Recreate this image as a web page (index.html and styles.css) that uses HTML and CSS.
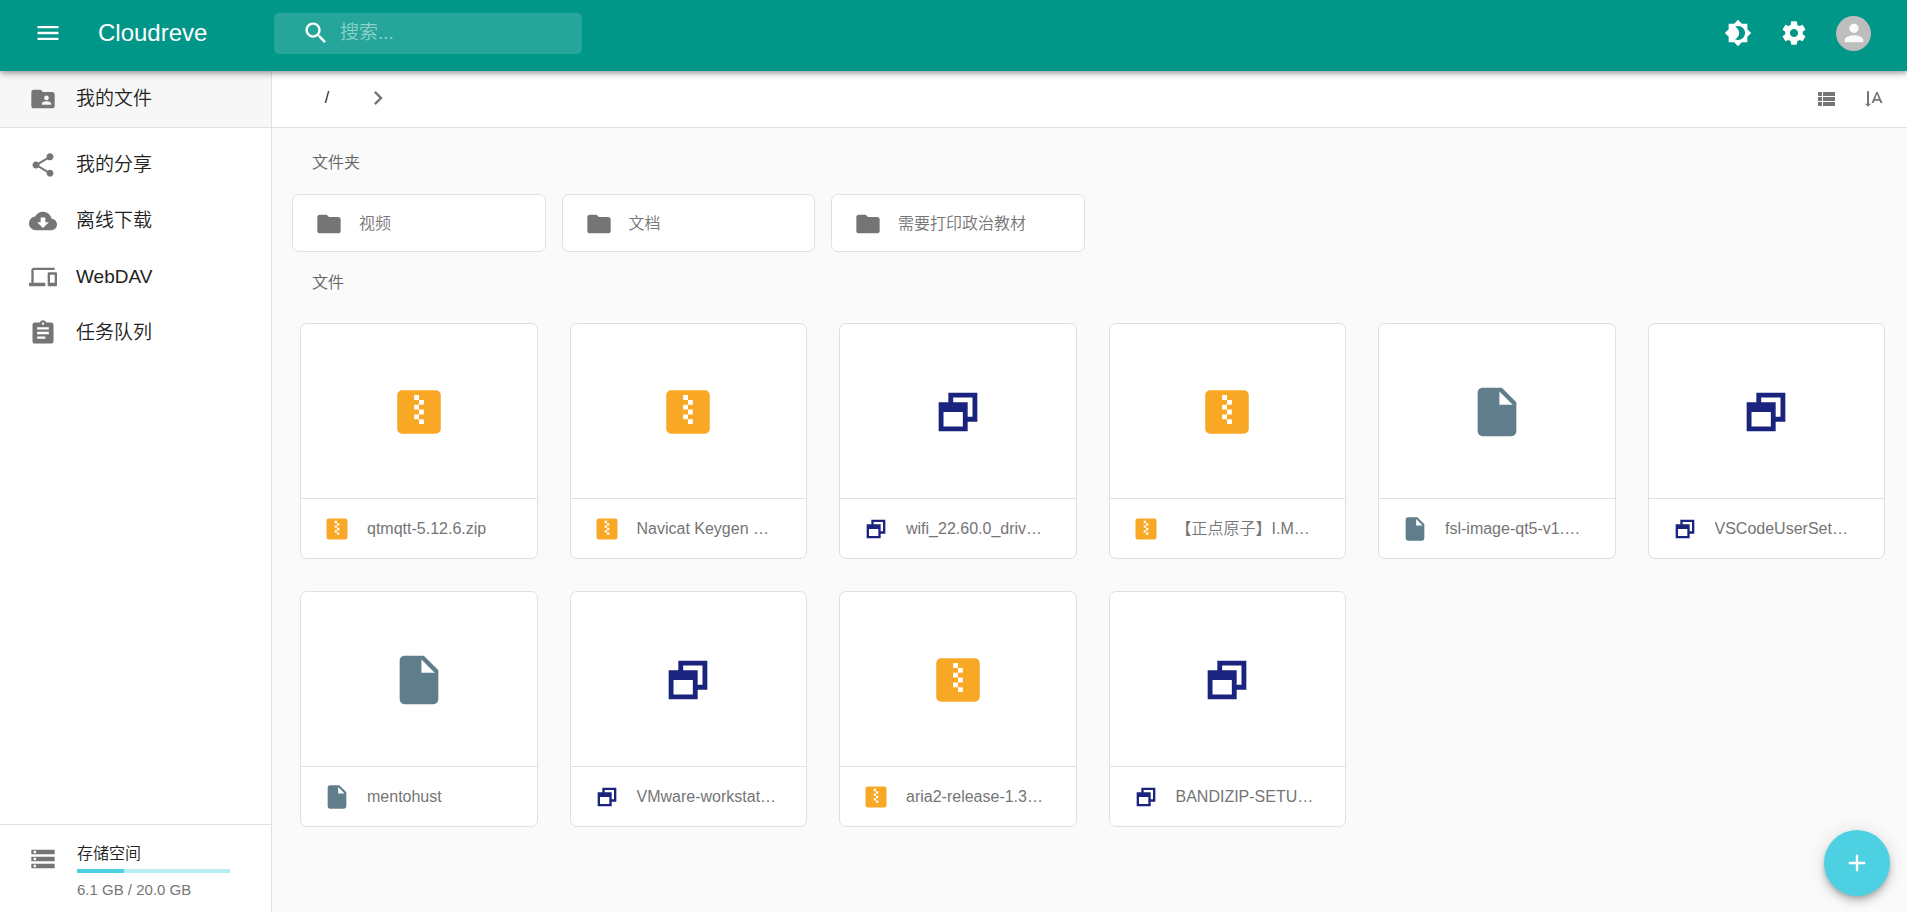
FILE: index.html
```
<!DOCTYPE html>
<html lang="zh-CN">
<head>
<meta charset="utf-8">
<meta name="viewport" content="width=device-width, initial-scale=1">
<title>Cloudreve</title>
<link rel="stylesheet" href="styles.css">
</head>
<body>
<svg class="sprite" aria-hidden="true">
  <symbol id="menu" viewBox="0 0 24 24"><path d="M3 18h18v-2H3v2zm0-5h18v-2H3v2zm0-7v2h18V6H3z"/></symbol>
  <symbol id="search" viewBox="0 0 24 24"><path d="M15.5 14h-.79l-.28-.27C15.41 12.59 16 11.11 16 9.5 16 5.91 13.09 3 9.5 3S3 5.91 3 9.5 5.91 16 9.5 16c1.61 0 3.09-.59 4.23-1.57l.27.28v.79l5 4.99L20.49 19l-4.99-5zm-6 0C7.01 14 5 11.99 5 9.5S7.01 5 9.5 5 14 7.01 14 9.5 11.99 14 9.5 14z"/></symbol>
  <symbol id="theme" viewBox="0 0 24 24"><path d="M20 8.69V4h-4.69L12 .69 8.69 4H4v4.69L.69 12 4 15.31V20h4.69L12 23.31 15.31 20H20v-4.69L23.31 12 20 8.69zM12 18c-.89 0-1.74-.2-2.5-.55C11.56 16.5 13 14.42 13 12s-1.44-4.5-3.5-5.45C10.26 6.2 11.11 6 12 6c3.31 0 6 2.69 6 6s-2.69 6-6 6z"/></symbol>
  <symbol id="settings" viewBox="0 0 24 24"><path d="M19.43 12.98c.04-.32.07-.64.07-.98s-.03-.66-.07-.98l2.11-1.65c.19-.15.24-.42.12-.64l-2-3.46c-.12-.22-.39-.3-.61-.22l-2.49 1c-.52-.4-1.08-.73-1.69-.98l-.38-2.65C14.46 2.18 14.25 2 14 2h-4c-.25 0-.46.18-.49.42l-.38 2.65c-.61.25-1.17.59-1.69.98l-2.49-1c-.23-.09-.49 0-.61.22l-2 3.46c-.13.22-.07.49.12.64l2.11 1.65c-.04.32-.07.65-.07.98s.03.66.07.98l-2.11 1.65c-.19.15-.24.42-.12.64l2 3.46c.12.22.39.3.61.22l2.49-1c.52.4 1.08.73 1.69.98l.38 2.65c.03.24.24.42.49.42h4c.25 0 .46-.18.49-.42l.38-2.65c.61-.25 1.17-.59 1.69-.98l2.49 1c.23.09.49 0 .61-.22l2-3.46c.12-.22.07-.49-.12-.64l-2.11-1.65zM12 15.5c-1.93 0-3.5-1.57-3.5-3.5s1.57-3.5 3.5-3.5 3.5 1.57 3.5 3.5-1.57 3.5-3.5 3.5z"/></symbol>
  <symbol id="person" viewBox="0 0 24 24"><path d="M12 12c2.21 0 4-1.79 4-4s-1.79-4-4-4-4 1.79-4 4 1.79 4 4 4zm0 2c-2.67 0-8 1.34-8 4v2h16v-2c0-2.66-5.33-4-8-4z"/></symbol>
  <symbol id="folder-shared" viewBox="0 0 24 24"><path d="M20 6h-8l-2-2H4c-1.1 0-1.99.9-1.99 2L2 18c0 1.1.9 2 2 2h16c1.1 0 2-.9 2-2V8c0-1.1-.9-2-2-2zm-5 3c1.1 0 2 .9 2 2s-.9 2-2 2-2-.9-2-2 .9-2 2-2zm4 8h-8v-1c0-1.33 2.67-2 4-2s4 .67 4 2v1z"/></symbol>
  <symbol id="share" viewBox="0 0 24 24"><path d="M18 16.08c-.76 0-1.44.3-1.96.77L8.91 12.7c.05-.23.09-.46.09-.7s-.04-.47-.09-.7l7.05-4.11c.54.5 1.25.81 2.04.81 1.66 0 3-1.34 3-3s-1.34-3-3-3-3 1.34-3 3c0 .24.04.47.09.7L8.04 9.81C7.5 9.31 6.79 9 6 9c-1.66 0-3 1.34-3 3s1.34 3 3 3c.79 0 1.5-.31 2.04-.81l7.12 4.16c-.05.21-.08.43-.08.65 0 1.61 1.31 2.92 2.92 2.92s2.92-1.31 2.92-2.92-1.31-2.92-2.92-2.92z"/></symbol>
  <symbol id="cloud-download" viewBox="0 0 24 24"><path d="M19.35 10.04C18.67 6.59 15.64 4 12 4 9.11 4 6.6 5.64 5.35 8.04 2.34 8.36 0 10.91 0 14c0 3.31 2.69 6 6 6h13c2.76 0 5-2.24 5-5 0-2.64-2.05-4.78-4.65-4.96zM17 13l-5 5-5-5h3V9h4v4h3z"/></symbol>
  <symbol id="devices" viewBox="0 0 24 24"><path d="M4 6h18V4H4c-1.1 0-2 .9-2 2v11H0v3h14v-3H4V6zm19 2h-6c-.55 0-1 .45-1 1v10c0 .55.45 1 1 1h6c.55 0 1-.45 1-1V9c0-.55-.45-1-1-1zm-1 9h-4v-7h4v7z"/></symbol>
  <symbol id="assignment" viewBox="0 0 24 24"><path d="M19 3h-4.18C14.4 1.84 13.3 1 12 1c-1.3 0-2.4.84-2.82 2H5c-1.1 0-2 .9-2 2v14c0 1.1.9 2 2 2h14c1.1 0 2-.9 2-2V5c0-1.1-.9-2-2-2zm-7 0c.55 0 1 .45 1 1s-.45 1-1 1-1-.45-1-1 .45-1 1-1zm2 14H7v-2h7v2zm3-4H7v-2h10v2zm0-4H7V7h10v2z"/></symbol>
  <symbol id="storage" viewBox="0 0 24 24"><path d="M2 20h20v-4H2v4zm2-3h2v2H4v-2zM2 4v4h20V4H2zm4 3H4V5h2v2zm-4 7h20v-4H2v4zm2-3h2v2H4v-2z"/></symbol>
  <symbol id="chevron" viewBox="0 0 24 24"><path d="M10 6L8.59 7.41 13.17 12l-4.58 4.59L10 18l6-6z"/></symbol>
  <symbol id="view-list" viewBox="0 0 24 24"><path d="M4 14h4v-4H4v4zm0 5h4v-4H4v4zM4 9h4V5H4v4zm5 5h12v-4H9v4zm0 5h12v-4H9v4zM9 5v4h12V5H9z"/></symbol>
  <symbol id="sort" viewBox="0 0 24 24"><path d="M15.75 5h-1.5L9.5 16h2.1l.9-2.2h5l.9 2.2h2.1L15.75 5zm-2.62 7L15 6.98 16.87 12h-3.74zM6 19.75l3-3H7V4.25H5v12.5H3l3 3z"/></symbol>
  <symbol id="folder" viewBox="0 0 24 24"><path d="M10 4H4c-1.1 0-1.99.9-1.99 2L2 18c0 1.1.9 2 2 2h16c1.1 0 2-.9 2-2V8c0-1.1-.9-2-2-2h-8l-2-2z"/></symbol>
  <symbol id="zip" viewBox="0 0 24 24"><path fill-rule="evenodd" d="M5 3h14a2 2 0 0 1 2 2v14a2 2 0 0 1-2 2H5a2 2 0 0 1-2-2V5a2 2 0 0 1 2-2zM10 5v2h2V5zM12 7v2h2V7zM10 9v2h2V9zM12 11v2h2v-2zM10 13v2h2v-2zM12 15v2h2v-2z"/></symbol>
  <symbol id="exe" viewBox="0 0 24 24"><path d="M4 8h4V4h12v12h-4v4H4V8m12 0v6h2V6h-8v2h6M6 12v6h8v-6H6z"/></symbol>
  <symbol id="file" viewBox="0 0 24 24"><path d="M13 9V3.5L18.5 9M6 2c-1.11 0-2 .89-2 2v16a2 2 0 0 0 2 2h12a2 2 0 0 0 2-2V8l-6-6H6z"/></symbol>
  <symbol id="add" viewBox="0 0 24 24"><path d="M19 13h-6v6h-2v-6H5v-2h6V5h2v6h6v2z"/></symbol>
</svg>

<header class="appbar">
  <div class="brand">
    <button class="icon-button" aria-label="菜单"><svg class="icon"><use href="#menu"/></svg></button>
    <h1 class="brand-name">Cloudreve</h1>
  </div>
  <label class="search">
    <svg class="icon"><use href="#search"/></svg>
    <input class="search-input" type="text" placeholder="搜索..." aria-label="搜索">
  </label>
  <div class="appbar-actions">
    <button class="icon-button" aria-label="切换主题"><svg class="icon"><use href="#theme"/></svg></button>
    <button class="icon-button" aria-label="设置"><svg class="icon"><use href="#settings"/></svg></button>
    <button class="icon-button avatar" aria-label="用户"><svg class="icon"><use href="#person"/></svg></button>
  </div>
</header>

<div class="layout">
  <aside class="sidebar">
    <nav class="nav">
      <div class="nav-top">
        <a class="nav-item nav-item-active" href="#"><svg class="icon"><use href="#folder-shared"/></svg>我的文件</a>
      </div>
      <div class="nav-list">
        <a class="nav-item" href="#"><svg class="icon"><use href="#share"/></svg>我的分享</a>
        <a class="nav-item" href="#"><svg class="icon"><use href="#cloud-download"/></svg>离线下载</a>
        <a class="nav-item" href="#"><svg class="icon"><use href="#devices"/></svg>WebDAV</a>
        <a class="nav-item" href="#"><svg class="icon"><use href="#assignment"/></svg>任务队列</a>
      </div>
    </nav>
    <div class="quota">
      <svg class="icon"><use href="#storage"/></svg>
      <div class="quota-body">
        <div class="quota-title">存储空间</div>
        <div class="quota-bar" role="progressbar" aria-label="存储空间" aria-valuenow="31" aria-valuemin="0" aria-valuemax="100"><div class="quota-fill" style="width: 31%"></div></div>
        <div class="quota-text">6.1 GB / 20.0 GB</div>
      </div>
    </div>
  </aside>

  <main class="main">
    <div class="toolbar">
      <button class="crumb">/</button>
      <svg class="icon"><use href="#chevron"/></svg>
      <div class="toolbar-actions">
        <button class="icon-button" aria-label="列表视图"><svg class="icon icon-small"><use href="#view-list"/></svg></button>
        <button class="icon-button" aria-label="排序"><svg class="icon icon-small"><use href="#sort"/></svg></button>
      </div>
    </div>

    <section class="section">
      <h2 class="section-title">文件夹</h2>
      <div class="grid folders">
        <button class="folder"><svg class="icon"><use href="#folder"/></svg><span class="name">视频</span></button>
        <button class="folder"><svg class="icon"><use href="#folder"/></svg><span class="name">文档</span></button>
        <button class="folder"><svg class="icon"><use href="#folder"/></svg><span class="name">需要打印政治教材</span></button>
      </div>
    </section>

    <section class="section">
      <h2 class="section-title">文件</h2>
      <div class="grid files">
        <button class="file zip"><span class="preview"><svg class="icon icon-large"><use href="#zip"/></svg></span><span class="file-footer"><svg class="icon"><use href="#zip"/></svg><span class="name">qtmqtt-5.12.6.zip</span></span></button>
        <button class="file zip"><span class="preview"><svg class="icon icon-large"><use href="#zip"/></svg></span><span class="file-footer"><svg class="icon"><use href="#zip"/></svg><span class="name">Navicat Keygen …</span></span></button>
        <button class="file exe"><span class="preview"><svg class="icon icon-large"><use href="#exe"/></svg></span><span class="file-footer"><svg class="icon"><use href="#exe"/></svg><span class="name">wifi_22.60.0_driv…</span></span></button>
        <button class="file zip"><span class="preview"><svg class="icon icon-large"><use href="#zip"/></svg></span><span class="file-footer"><svg class="icon"><use href="#zip"/></svg><span class="name">【正点原子】I.M…</span></span></button>
        <button class="file other"><span class="preview"><svg class="icon icon-large"><use href="#file"/></svg></span><span class="file-footer"><svg class="icon"><use href="#file"/></svg><span class="name">fsl-image-qt5-v1.…</span></span></button>
        <button class="file exe"><span class="preview"><svg class="icon icon-large"><use href="#exe"/></svg></span><span class="file-footer"><svg class="icon"><use href="#exe"/></svg><span class="name">VSCodeUserSet…</span></span></button>
        <button class="file other"><span class="preview"><svg class="icon icon-large"><use href="#file"/></svg></span><span class="file-footer"><svg class="icon"><use href="#file"/></svg><span class="name">mentohust</span></span></button>
        <button class="file exe"><span class="preview"><svg class="icon icon-large"><use href="#exe"/></svg></span><span class="file-footer"><svg class="icon"><use href="#exe"/></svg><span class="name">VMware-workstat…</span></span></button>
        <button class="file zip"><span class="preview"><svg class="icon icon-large"><use href="#zip"/></svg></span><span class="file-footer"><svg class="icon"><use href="#zip"/></svg><span class="name">aria2-release-1.3…</span></span></button>
        <button class="file exe"><span class="preview"><svg class="icon icon-large"><use href="#exe"/></svg></span><span class="file-footer"><svg class="icon"><use href="#exe"/></svg><span class="name">BANDIZIP-SETU…</span></span></button>
      </div>
    </section>
  </main>
</div>

<button class="fab" aria-label="新建"><svg class="icon"><use href="#add"/></svg></button>
</body>
</html>
```

FILE: styles.css
```
* {
  box-sizing: border-box;
}

body {
  margin: 0;
  min-height: 100vh;
  display: flex;
  flex-direction: column;
  background: #fafafa;
  color: #212121;
  font-family: "Liberation Sans", "Noto Sans CJK SC", sans-serif;
  font-size: 16px;
  font-weight: 350;
  line-height: 24px;
}

button {
  margin: 0;
  padding: 0;
  border: 0;
  background: none;
  color: inherit;
  font: inherit;
  cursor: pointer;
}

.sprite {
  display: none;
}

.icon {
  width: 28px;
  height: 28px;
  flex: none;
  fill: currentColor;
}

.icon-small {
  width: 24px;
  height: 24px;
}

.icon-large {
  width: 58px;
  height: 58px;
}

.icon-button {
  display: flex;
  align-items: center;
  justify-content: center;
}

/* App bar */
.appbar {
  position: relative;
  z-index: 2;
  display: flex;
  align-items: center;
  padding: 13px 36px 17px 0;
  background: #009688;
  color: #fff;
  box-shadow: 0 2px 4px -1px rgba(0, 0, 0, .2), 0 4px 5px rgba(0, 0, 0, .14), 0 1px 10px rgba(0, 0, 0, .12);
}

.brand {
  width: 274px;
  display: flex;
  align-items: center;
  gap: 36px;
  padding: 0 0 2px 34px;
}

.brand-name {
  margin: 0;
  font-size: 24px;
  font-weight: 400;
  line-height: 32px;
}

.search {
  width: 308px;
  height: 41px;
  display: flex;
  align-items: center;
  gap: 10px;
  padding: 0 16px 2px 28px;
  border-radius: 5px;
  background: #26a69a;
}

.search-input {
  min-width: 0;
  flex: 1;
  padding: 0;
  border: 0;
  outline: 0;
  background: none;
  color: #fff;
  font: inherit;
  font-size: 19px;
}

.search-input::placeholder {
  color: #8fd0c9;
  opacity: 1;
}

.appbar-actions {
  display: flex;
  align-items: center;
  gap: 28px;
  margin-left: auto;
  padding-bottom: 1px;
}

.avatar {
  width: 35px;
  height: 35px;
  border-radius: 50%;
  background: #bdbdbd;
  color: #fafafa;
}

/* Layout */
.layout {
  flex: 1;
  display: flex;
}

.sidebar {
  width: 272px;
  flex: none;
  display: flex;
  flex-direction: column;
  justify-content: space-between;
  border-right: 1px solid #e0e0e0;
  background: #fff;
}

.nav-top {
  border-bottom: 1px solid #e0e0e0;
}

.nav-list {
  padding: 9px 0;
}

.nav-item {
  height: 56px;
  display: flex;
  align-items: center;
  gap: 19px;
  padding: 0 29px;
  color: #212121;
  font-size: 19px;
  text-decoration: none;
}

.nav-item-active {
  background: #f7f7f7;
}

.nav-item .icon,
.quota .icon {
  color: #757575;
}

.quota {
  display: flex;
  align-items: flex-start;
  gap: 20px;
  padding: 17px 41px 12px 29px;
  border-top: 1px solid #e0e0e0;
}

.quota .icon {
  margin-top: 3px;
}

.quota-body {
  flex: 1;
}

.quota-bar {
  height: 4px;
  margin: 3px 0 7px;
  background: #b8ecf3;
}

.quota-fill {
  height: 100%;
  background: #4dd0e1;
}

.quota-text {
  color: #757575;
  font-size: 15px;
  line-height: 20px;
}

/* Content */
.main {
  min-width: 0;
  flex: 1;
}

.toolbar {
  height: 57px;
  display: flex;
  align-items: center;
  padding: 0 21px 3px 34px;
  border-bottom: 1px solid #e0e0e0;
  background: #fff;
}

.toolbar .icon {
  color: #757575;
}

.crumb {
  width: 42px;
  margin-right: 16px;
}

.toolbar-actions {
  display: flex;
  gap: 24px;
  margin-left: auto;
  padding-top: 2px;
}

.section {
  padding-top: 19px;
}

.toolbar + .section {
  padding-top: 23px;
}

.section-title {
  margin: 0;
  padding-left: 40px;
  color: #616161;
  font-size: 16px;
  font-weight: 350;
}

.grid {
  display: grid;
  grid-template-columns: repeat(6, minmax(0, 1fr));
}

.folders {
  gap: 16px;
  padding: 19px 14px 0 20px;
}

.files {
  gap: 32px;
  padding: 28px 22px 32px 28px;
}

.folder,
.file {
  border: 1px solid #e0e0e0;
  border-radius: 7px;
  background: #fff;
  color: #757575;
  text-align: left;
}

.folder,
.file-footer {
  display: flex;
  align-items: center;
  gap: 16px;
  padding: 0 22px;
}

.folder {
  height: 58px;
  padding-top: 2px;
}

.file {
  display: flex;
  flex-direction: column;
}

.preview {
  width: 100%;
  height: 175px;
  display: flex;
  align-items: center;
  justify-content: center;
  padding-top: 2px;
  border-bottom: 1px solid #e0e0e0;
}

.file-footer {
  width: 100%;
  height: 59px;
}

.name {
  min-width: 0;
  overflow: hidden;
  text-overflow: ellipsis;
  white-space: nowrap;
}

.zip .icon {
  color: #f9a825;
}

.exe .icon {
  color: #1a237e;
}

.other .icon {
  color: #607d8b;
}

/* Floating action button */
.fab {
  position: fixed;
  right: 17px;
  bottom: 16px;
  z-index: 3;
  width: 66px;
  height: 66px;
  display: flex;
  align-items: center;
  justify-content: center;
  border-radius: 50%;
  background: #4dd0e1;
  color: #fff;
  box-shadow: 0 3px 5px -1px rgba(0, 0, 0, .2), 0 6px 10px rgba(0, 0, 0, .14), 0 1px 18px rgba(0, 0, 0, .12);
}
```
